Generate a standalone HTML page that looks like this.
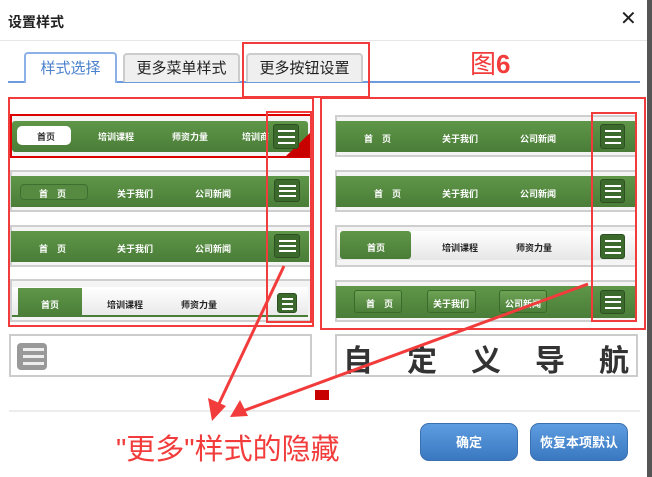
<!DOCTYPE html>
<html><head><meta charset="utf-8"><style>
*{margin:0;padding:0;box-sizing:border-box}
body{width:652px;height:477px;background:#fff;position:relative;overflow:hidden;font-family:"Liberation Sans","Noto Sans CJK SC",sans-serif}
.a{position:absolute}
.t{position:absolute;font-size:9px;color:#fff;font-weight:bold;white-space:nowrap}
.g{background:linear-gradient(#5f9648,#4a7d38)}
.box{position:absolute;border:2px solid #cfcfcf;background:#f4f4f4}
.ic{position:absolute;background:#3c6a2d;border:1px solid #2d4f22;border-radius:3px}
.ic i{position:absolute;left:4px;right:3px;height:2px;background:#fff}
.red{position:absolute;border:2px solid #f23b3b}
.btn{position:absolute;border-radius:9px;background:linear-gradient(#5e9de0,#3a77c0);border:1px solid #3a6fb0;color:#fff;font-weight:bold;font-size:13px;text-align:center;line-height:38px}
.tab{position:absolute;top:53px;height:29px;background:#efefef;border:2px solid #ccc;border-bottom:none;border-radius:4px 4px 0 0;color:#222;font-size:15px;text-align:center;line-height:28px}
</style></head><body>
<div class="a" style="left:8px;top:12px;font-size:14px;font-weight:bold;color:#222">设置样式</div>
<div class="a" style="left:620px;top:6px;font-size:20px;color:#222">✕</div>
<div class="a" style="left:0;top:40px;width:652px;height:1px;background:#e6e6e6"></div>
<div class="a" style="left:647px;top:0;width:5px;height:477px;background:#555"></div>
<div class="a" style="left:8px;top:81px;width:632px;height:2px;background:#6e9bdc"></div>
<div class="a" style="left:24px;top:52px;width:93px;height:31px;background:#fff;border:2px solid #8cb1e6;border-bottom:none;border-radius:4px 4px 0 0;color:#4a80cc;font-size:15px;text-align:center;line-height:30px">样式选择</div>
<div class="tab" style="left:123px;width:117px">更多菜单样式</div>
<div class="tab" style="left:246px;width:117px">更多按钮设置</div>
<div class="red" style="left:242px;top:42px;width:128px;height:56px"></div>
<div class="a" style="left:470px;top:44px;font-size:26px;color:#f23b3b">图<b>6</b></div>

<div class="red" style="left:8px;top:97px;width:306px;height:230px"></div>
<div class="a" style="left:10px;top:114px;width:302px;height:44px;border:2px solid #d00;background:#f4f4f4"></div>
<div class="a g" style="left:12px;top:121px;width:296px;height:31px;border-radius:3px"></div>
<div class="a" style="left:17px;top:126px;width:54px;height:19px;background:#fff;border-radius:5px"></div>
<div class="t" style="left:37px;top:130px;color:#333">首页</div>
<div class="t" style="left:98px;top:130px">培训课程</div>
<div class="t" style="left:172px;top:130px">师资力量</div>
<div class="t" style="left:242px;top:130px">培训商</div>
<div class="a" style="left:285px;top:131px;width:0;height:0;border-left:27px solid transparent;border-bottom:26px solid #c80000"></div>

<div class="box" style="left:10px;top:170px;width:302px;height:42px"></div>
<div class="a g" style="left:11px;top:176px;width:298px;height:31px"></div>
<div class="a" style="left:20px;top:184px;width:68px;height:16px;border:1px solid #3f6f30;border-radius:4px;background:#568a40"></div>
<div class="t" style="left:39px;top:187px">首　页</div>
<div class="t" style="left:117px;top:187px">关于我们</div>
<div class="t" style="left:195px;top:187px">公司新闻</div>

<div class="box" style="left:10px;top:225px;width:302px;height:42px"></div>
<div class="a g" style="left:11px;top:231px;width:298px;height:31px"></div>
<div class="t" style="left:39px;top:242px">首　页</div>
<div class="t" style="left:117px;top:242px">关于我们</div>
<div class="t" style="left:195px;top:242px">公司新闻</div>

<div class="box" style="left:10px;top:279px;width:302px;height:43px"></div>
<div class="a" style="left:12px;top:287px;width:296px;height:30px;background:linear-gradient(#fff,#e8e8e8)"></div>
<div class="a" style="left:12px;top:315px;width:296px;height:2px;background:#4a7d38"></div>
<div class="a g" style="left:18px;top:288px;width:64px;height:29px"></div>
<div class="t" style="left:41px;top:298px">首页</div>
<div class="t" style="left:107px;top:298px;color:#222">培训课程</div>
<div class="t" style="left:181px;top:298px;color:#222">师资力量</div>

<div class="ic" style="left:273px;top:124px;width:26px;height:25px"><i style="top:5px"></i><i style="top:11px"></i><i style="top:17px"></i></div>
<div class="ic" style="left:274px;top:179px;width:26px;height:23px"><i style="top:5px"></i><i style="top:10px"></i><i style="top:15px"></i></div>
<div class="ic" style="left:274px;top:234px;width:26px;height:24px"><i style="top:5px"></i><i style="top:10px"></i><i style="top:15px"></i></div>
<div class="ic" style="left:277px;top:293px;width:20px;height:20px"><i style="top:4px"></i><i style="top:9px"></i><i style="top:14px"></i></div>
<div class="red" style="left:266px;top:111px;width:46px;height:212px"></div>

<div class="red" style="left:320px;top:97px;width:326px;height:233px"></div>
<div class="box" style="left:335px;top:115px;width:302px;height:42px"></div>
<div class="a g" style="left:336px;top:121px;width:300px;height:31px"></div>
<div class="t" style="left:364px;top:132px">首　页</div>
<div class="t" style="left:442px;top:132px">关于我们</div>
<div class="t" style="left:520px;top:132px">公司新闻</div>
<div class="box" style="left:335px;top:170px;width:302px;height:42px"></div>
<div class="a g" style="left:336px;top:176px;width:300px;height:31px"></div>
<div class="t" style="left:374px;top:187px">首　页</div>
<div class="t" style="left:442px;top:187px">关于我们</div>
<div class="t" style="left:520px;top:187px">公司新闻</div>
<div class="box" style="left:335px;top:225px;width:302px;height:42px"></div>
<div class="a" style="left:337px;top:231px;width:298px;height:29px;background:linear-gradient(#fff,#e6e6e6)"></div>
<div class="a g" style="left:340px;top:231px;width:71px;height:28px;border-radius:3px"></div>
<div class="t" style="left:367px;top:241px">首页</div>
<div class="t" style="left:442px;top:241px;color:#222">培训课程</div>
<div class="t" style="left:516px;top:241px;color:#222">师资力量</div>
<div class="box" style="left:335px;top:280px;width:302px;height:42px"></div>
<div class="a g" style="left:336px;top:286px;width:300px;height:32px"></div>
<div class="a" style="left:354px;top:290px;width:48px;height:23px;border-radius:3px;background:linear-gradient(#6ea355,#4c7f39);border:1px solid #3a6a2a"></div>
<div class="a" style="left:427px;top:290px;width:49px;height:23px;border-radius:3px;background:linear-gradient(#6ea355,#4c7f39);border:1px solid #3a6a2a"></div>
<div class="a" style="left:499px;top:290px;width:48px;height:23px;border-radius:3px;background:linear-gradient(#6ea355,#4c7f39);border:1px solid #3a6a2a"></div>
<div class="t" style="left:366px;top:297px">首　页</div>
<div class="t" style="left:433px;top:297px">关于我们</div>
<div class="t" style="left:505px;top:297px">公司新闻</div>
<div class="ic" style="left:600px;top:124px;width:25px;height:25px"><i style="top:5px"></i><i style="top:11px"></i><i style="top:17px"></i></div>
<div class="ic" style="left:600px;top:179px;width:25px;height:24px"><i style="top:5px"></i><i style="top:10px"></i><i style="top:16px"></i></div>
<div class="ic" style="left:600px;top:234px;width:25px;height:25px"><i style="top:5px"></i><i style="top:11px"></i><i style="top:17px"></i></div>
<div class="ic" style="left:600px;top:290px;width:25px;height:24px"><i style="top:5px"></i><i style="top:10px"></i><i style="top:16px"></i></div>
<div class="red" style="left:591px;top:112px;width:46px;height:210px"></div>

<div class="a" style="left:9px;top:334px;width:303px;height:43px;border:2px solid #ccc;background:#fff"></div>
<div class="a" style="left:17px;top:343px;width:30px;height:27px;background:#999;border-radius:4px"></div>
<div class="a" style="left:23px;top:348px;width:21px;height:3px;background:#eee"></div>
<div class="a" style="left:23px;top:355px;width:21px;height:3px;background:#eee"></div>
<div class="a" style="left:23px;top:362px;width:21px;height:3px;background:#eee"></div>
<div class="a" style="left:335px;top:334px;width:303px;height:43px;border:2px solid #ccc;background:#fff"></div>
<div class="a" style="left:343px;top:336px;font-size:30px;font-weight:bold;color:#333;letter-spacing:34px;white-space:nowrap">自定义导航</div>
<div class="a" style="left:9px;top:410px;width:631px;height:2px;background:#ececec"></div>
<div class="a" style="left:315px;top:390px;width:14px;height:10px;background:#c80000"></div>
<div class="btn" style="left:420px;top:423px;width:98px;height:38px">确定</div>
<div class="btn" style="left:530px;top:423px;width:98px;height:38px">恢复本项默认</div>
<div class="a" style="left:116px;top:426px;font-size:29px;color:#f23b3b;white-space:nowrap">"更多"样式的隐藏</div>

<svg class="a" style="left:0;top:0" width="652" height="477">
<g stroke="#f23b3b" stroke-width="3" fill="#f23b3b">
<line x1="284" y1="266" x2="216" y2="410"/>
<line x1="588" y1="284" x2="240" y2="412"/>
<polygon points="212,421 208,398 226,406" stroke="none"/>
<polygon points="230,417 240,400 248,416" stroke="none"/>
</g>
</svg>
</body></html>
